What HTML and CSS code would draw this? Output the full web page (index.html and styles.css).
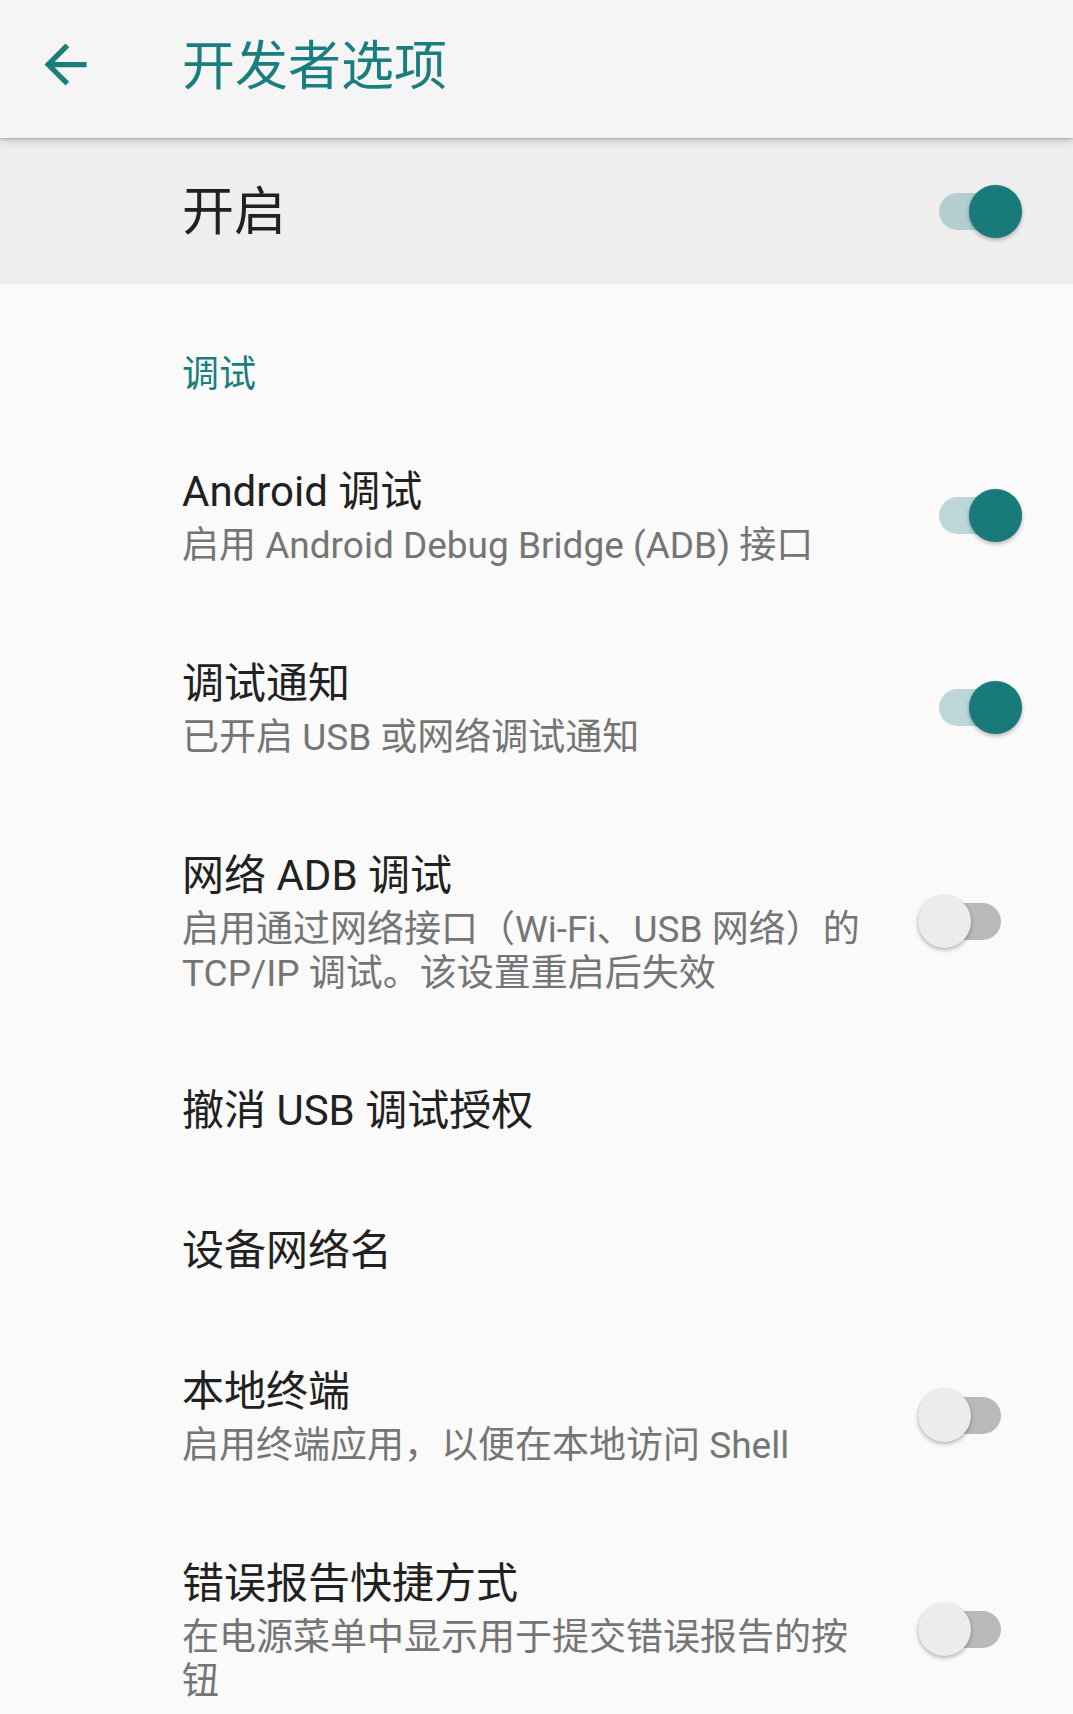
FILE: index.html
```html
<!DOCTYPE html>
<html lang="zh-CN">
<head>
<meta charset="utf-8">
<title>开发者选项</title>
<link rel="stylesheet" href="styles.css">
</head>
<body>
<header class="toolbar">
  <svg class="back" viewBox="0 0 24 24" width="63" height="63"><path d="M20 11H7.83l5.59-5.59L12 4l-8 8 8 8 1.41-1.41L7.83 13H20v-2z"/></svg>
  <h1 class="title">开发者选项</h1>
</header>
<div class="master">
  <span class="master-label">开启</span>
  <span class="switch on"><span class="track"></span><span class="thumb"></span></span>
</div>
<main class="list">
  <div class="category">调试</div>

  <div class="item">
    <div class="text">
      <div class="item-title">Android 调试</div>
      <div class="summary">启用 Android Debug Bridge (ADB) 接口</div>
    </div>
    <div class="widget"><span class="switch on"><span class="track"></span><span class="thumb"></span></span></div>
  </div>

  <div class="item">
    <div class="text">
      <div class="item-title">调试通知</div>
      <div class="summary">已开启 USB 或网络调试通知</div>
    </div>
    <div class="widget"><span class="switch on"><span class="track"></span><span class="thumb"></span></span></div>
  </div>

  <div class="item">
    <div class="text">
      <div class="item-title">网络 ADB 调试</div>
      <div class="summary">启用通过网络接口（Wi-Fi、USB 网络）的 TCP/IP 调试。该设置重启后失效</div>
    </div>
    <div class="widget"><span class="switch off"><span class="track"></span><span class="thumb"></span></span></div>
  </div>

  <div class="item plain">
    <div class="text">
      <div class="item-title">撤消 USB 调试授权</div>
    </div>
  </div>

  <div class="item plain">
    <div class="text">
      <div class="item-title">设备网络名</div>
    </div>
  </div>

  <div class="item">
    <div class="text">
      <div class="item-title">本地终端</div>
      <div class="summary">启用终端应用，以便在本地访问 Shell</div>
    </div>
    <div class="widget"><span class="switch off"><span class="track"></span><span class="thumb"></span></span></div>
  </div>

  <div class="item">
    <div class="text">
      <div class="item-title">错误报告快捷方式</div>
      <div class="summary">在电源菜单中显示用于提交错误报告的按钮</div>
    </div>
    <div class="widget"><span class="switch off"><span class="track"></span><span class="thumb"></span></span></div>
  </div>
</main>
</body>
</html>
```
FILE: styles.css
```css
html, body {
  margin: 0;
  padding: 0;
}
body {
  background: #fafafa;
  font-family: Roboto, "Noto Sans CJK SC", "Noto Sans", sans-serif;
  color: #212121;
  width: 1073px;
  height: 1714px;
  overflow: hidden;
}
.toolbar {
  position: relative;
  z-index: 2;
  box-sizing: border-box;
  height: 138px;
  background: #f5f5f5;
  display: flex;
  align-items: center;
  padding: 0 0 10px 34px;
  box-shadow: 0 1px 2px rgba(0, 0, 0, 0.18), 0 3px 8px rgba(0, 0, 0, 0.18);
}
.back {
  fill: #1a7d7e;
  flex: none;
}
.title {
  margin: 0 0 0 85px;
  padding-top: 6px;
  font-size: 53px;
  font-weight: 400;
  color: #1a7d7e;
  line-height: 1;
}
.master {
  height: 146px;
  background: #eeeeee;
  display: flex;
  align-items: center;
  padding-left: 182px;
}
.master-label {
  flex: 1;
  padding-top: 4px;
  font-size: 52px;
  line-height: 1;
}
.category {
  padding: 72px 0 28px 182px;
  font-size: 37px;
  line-height: 37px;
  color: #1a7d7e;
}
.item {
  display: flex;
  align-items: center;
  padding: 45.5px 0 45.5px 182px;
}
.item.plain {
  padding-top: 45px;
  padding-bottom: 45px;
}
.text {
  flex: 1;
  min-width: 0;
}
.item-title {
  font-size: 42px;
  line-height: 50px;
  color: #212121;
}
.summary {
  margin-top: 7px;
  font-size: 37px;
  line-height: 44px;
  color: #757575;
}
.widget {
  flex: none;
  width: 203px;
  display: flex;
  justify-content: flex-end;
  padding-bottom: 4px;
}
.switch {
  position: relative;
  display: block;
  width: 83px;
  height: 53px;
  flex: none;
}
.switch.on {
  margin-right: 51px;
}
.switch.off {
  margin-right: 72px;
}
.track {
  position: absolute;
  left: 0;
  top: 8px;
  width: 83px;
  height: 37px;
  border-radius: 19px;
}
.thumb {
  position: absolute;
  top: 0;
  width: 53px;
  height: 53px;
  border-radius: 50%;
  box-shadow: 0 2px 4px rgba(0, 0, 0, 0.28), 0 0 1px rgba(0, 0, 0, 0.12);
}
.switch.on .track {
  background: rgba(26, 125, 126, 0.28);
}
.switch.on .thumb {
  right: 0;
  background: #187a7b;
}
.switch.off .track {
  background: #b9b9b9;
}
.switch.off .thumb {
  left: 0;
  background: #ececec;
}
```
